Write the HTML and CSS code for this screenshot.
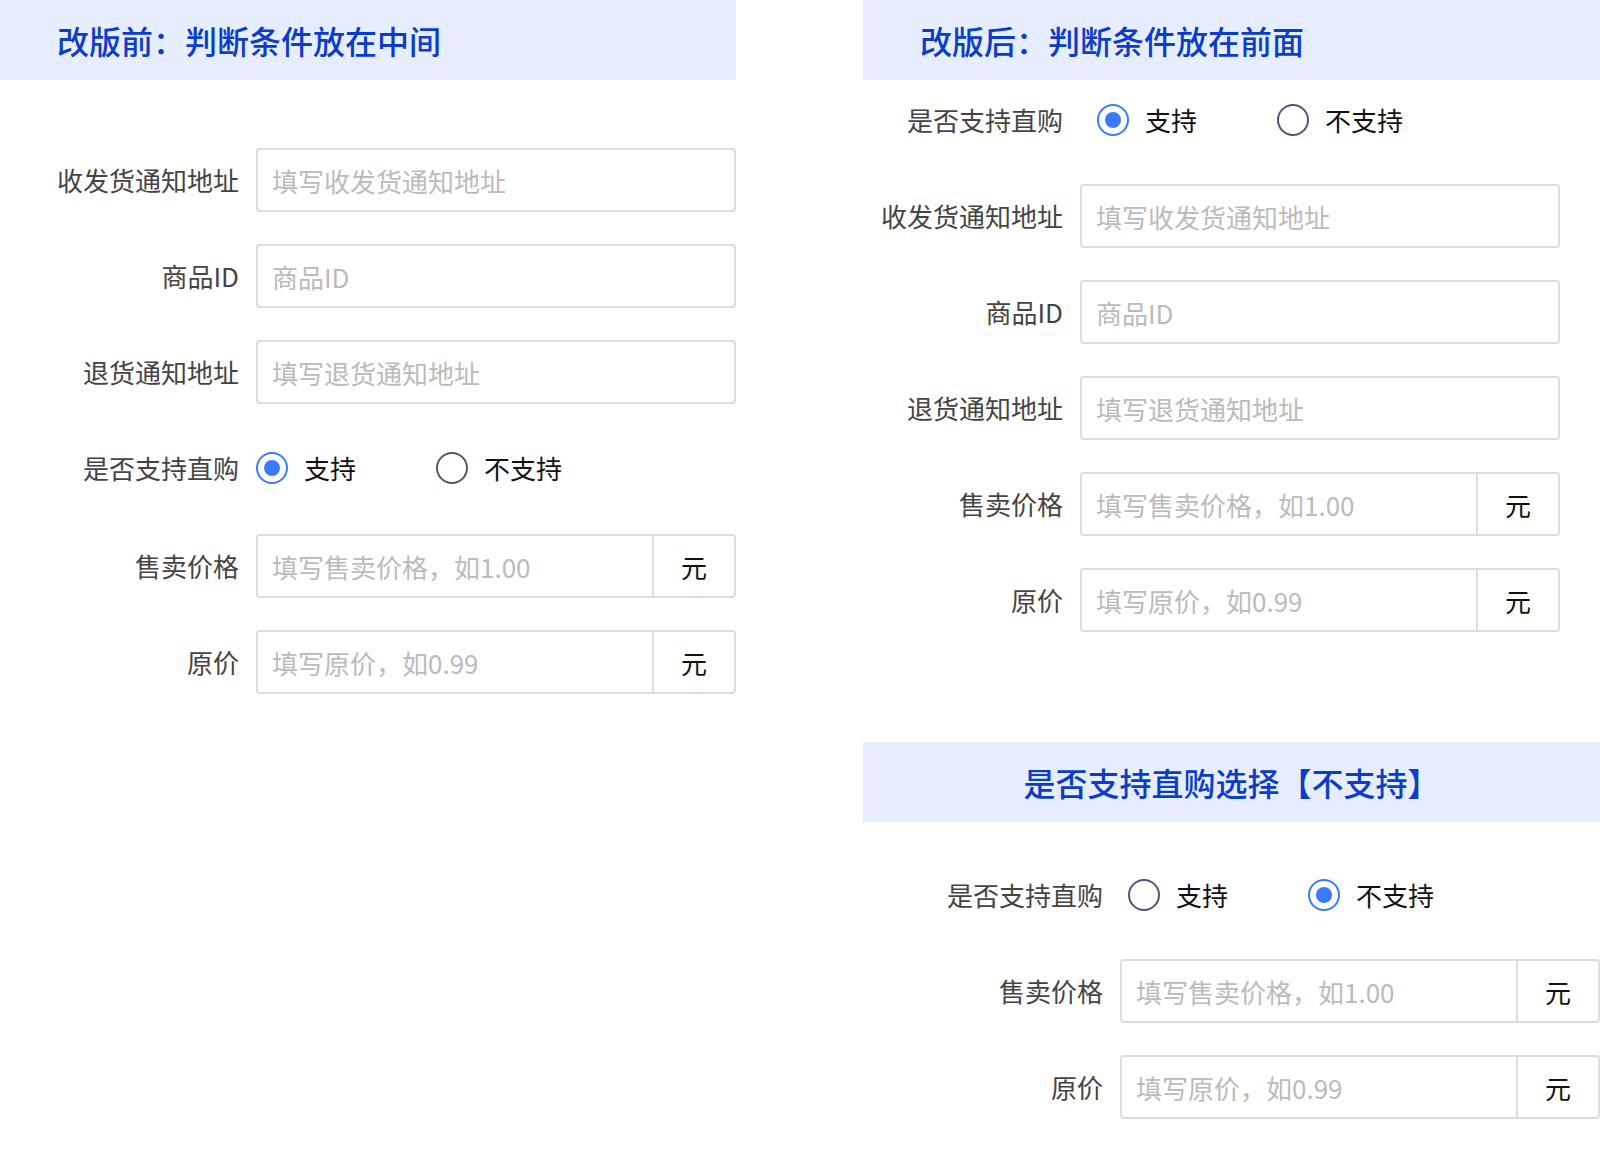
FILE: index.html
```html
<!DOCTYPE html>
<html lang="zh-CN">
<head>
  <meta charset="UTF-8">
  <meta name="viewport" content="width=device-width, initial-scale=1.0">
  <title>直购判断条件改版</title>
  <link rel="stylesheet" href="styles.css">
</head>
<body>
  <div class="page">
    <section class="panel panel-before">
      <h2 class="panel-title">改版前：判断条件放在中间</h2>
      <div class="form form-before">
        <div class="form-row">
          <label class="form-label">收发货通知地址</label>
          <input class="form-input" type="text" placeholder="填写收发货通知地址">
        </div>
        <div class="form-row">
          <label class="form-label">商品ID</label>
          <input class="form-input" type="text" placeholder="商品ID">
        </div>
        <div class="form-row">
          <label class="form-label">退货通知地址</label>
          <input class="form-input" type="text" placeholder="填写退货通知地址">
        </div>
        <div class="form-row form-row-radio">
          <span class="form-label">是否支持直购</span>
          <div class="radio-group">
            <label class="radio"><span class="radio-dot checked"></span>支持</label>
            <label class="radio"><span class="radio-dot"></span>不支持</label>
          </div>
        </div>
        <div class="form-row">
          <label class="form-label">售卖价格</label>
          <div class="input-group">
            <input class="group-input" type="text" placeholder="填写售卖价格，如1.00">
            <span class="addon">元</span>
          </div>
        </div>
        <div class="form-row">
          <label class="form-label">原价</label>
          <div class="input-group">
            <input class="group-input" type="text" placeholder="填写原价，如0.99">
            <span class="addon">元</span>
          </div>
        </div>
      </div>
    </section>

    <section class="panel panel-after">
      <h2 class="panel-title">改版后：判断条件放在前面</h2>
      <div class="form form-after">
        <div class="form-row">
          <span class="form-label">是否支持直购</span>
          <div class="radio-group">
            <label class="radio"><span class="radio-dot checked"></span>支持</label>
            <label class="radio"><span class="radio-dot"></span>不支持</label>
          </div>
        </div>
        <div class="form-row">
          <label class="form-label">收发货通知地址</label>
          <input class="form-input" type="text" placeholder="填写收发货通知地址">
        </div>
        <div class="form-row">
          <label class="form-label">商品ID</label>
          <input class="form-input" type="text" placeholder="商品ID">
        </div>
        <div class="form-row">
          <label class="form-label">退货通知地址</label>
          <input class="form-input" type="text" placeholder="填写退货通知地址">
        </div>
        <div class="form-row">
          <label class="form-label">售卖价格</label>
          <div class="input-group">
            <input class="group-input" type="text" placeholder="填写售卖价格，如1.00">
            <span class="addon">元</span>
          </div>
        </div>
        <div class="form-row">
          <label class="form-label">原价</label>
          <div class="input-group">
            <input class="group-input" type="text" placeholder="填写原价，如0.99">
            <span class="addon">元</span>
          </div>
        </div>
      </div>

      <h2 class="panel-title panel-title-center">是否支持直购选择【不支持】</h2>
      <div class="form form-unsupported">
        <div class="form-row">
          <span class="form-label">是否支持直购</span>
          <div class="radio-group">
            <label class="radio"><span class="radio-dot"></span>支持</label>
            <label class="radio"><span class="radio-dot checked"></span>不支持</label>
          </div>
        </div>
        <div class="form-row">
          <label class="form-label">售卖价格</label>
          <div class="input-group">
            <input class="group-input" type="text" placeholder="填写售卖价格，如1.00">
            <span class="addon">元</span>
          </div>
        </div>
        <div class="form-row">
          <label class="form-label">原价</label>
          <div class="input-group">
            <input class="group-input" type="text" placeholder="填写原价，如0.99">
            <span class="addon">元</span>
          </div>
        </div>
      </div>
    </section>
  </div>
</body>
</html>
```

FILE: styles.css
```css
body {
  margin: 0;
  background: #ffffff;
  font-family: "Noto Sans CJK SC", "Noto Sans", sans-serif;
  color: #444444;
}
.page {
  display: flex;
  width: 1600px;
}
.panel-before {
  width: 736px;
}
.panel-after {
  width: 737px;
  margin-left: auto;
}
.panel-title {
  margin: 0;
  height: 80px;
  line-height: 80px;
  padding-left: 57px;
  background: #e6edff;
  color: #0b3ccb;
  font-size: 32px;
  font-weight: 500;
}
.panel-title-center {
  margin-top: 110px;
  padding-left: 0;
  text-align: center;
}
.form {
  --label-w: 239px;
}
.form-before {
  margin-top: 68px;
}
.form-after {
  --label-w: 200px;
  margin-top: 8px;
}
.form-unsupported {
  --label-w: 240px;
  margin-top: 41px;
}
.form-row {
  display: flex;
  align-items: center;
  height: 64px;
}
.form-row + .form-row {
  margin-top: 32px;
}
.form-row-radio + .form-row {
  margin-top: 34px;
}
.form-label {
  flex-shrink: 0;
  width: var(--label-w);
  margin-right: 17px;
  text-align: right;
  font-size: 26px;
  line-height: 1;
  color: #444444;
}
.form-input,
.input-group {
  box-sizing: border-box;
  width: 480px;
  height: 64px;
  border: 2px solid #dadde2;
  border-radius: 4px;
  background: #ffffff;
}
.form-input {
  padding: 0 14px;
  font: inherit;
  font-size: 26px;
  color: #333333;
  outline: none;
}
.input-group {
  display: flex;
  overflow: hidden;
}
.group-input {
  flex: 1;
  min-width: 0;
  border: none;
  padding: 0 14px;
  font: inherit;
  font-size: 26px;
  color: #333333;
  outline: none;
}
.form-input::placeholder,
.group-input::placeholder {
  color: #bbbbbb;
}
.addon {
  display: flex;
  align-items: center;
  justify-content: center;
  width: 80px;
  border-left: 2px solid #dadde2;
  font-size: 26px;
  color: #111111;
}
.radio-group {
  display: flex;
  align-items: center;
}
.form-after .radio-group {
  padding-left: 17px;
}
.form-unsupported .radio-group {
  padding-left: 8px;
}
.radio {
  display: flex;
  align-items: center;
  width: 180px;
  font-size: 26px;
  line-height: 1;
  color: #111111;
}
.radio-dot {
  box-sizing: border-box;
  width: 32px;
  height: 32px;
  margin-right: 16px;
  border: 2px solid #4c5675;
  border-radius: 50%;
  display: flex;
  align-items: center;
  justify-content: center;
}
.radio-dot.checked {
  border-color: #3a7bfd;
}
.radio-dot.checked::after {
  content: "";
  width: 16px;
  height: 16px;
  border-radius: 50%;
  background: #3a7bfd;
}
```
